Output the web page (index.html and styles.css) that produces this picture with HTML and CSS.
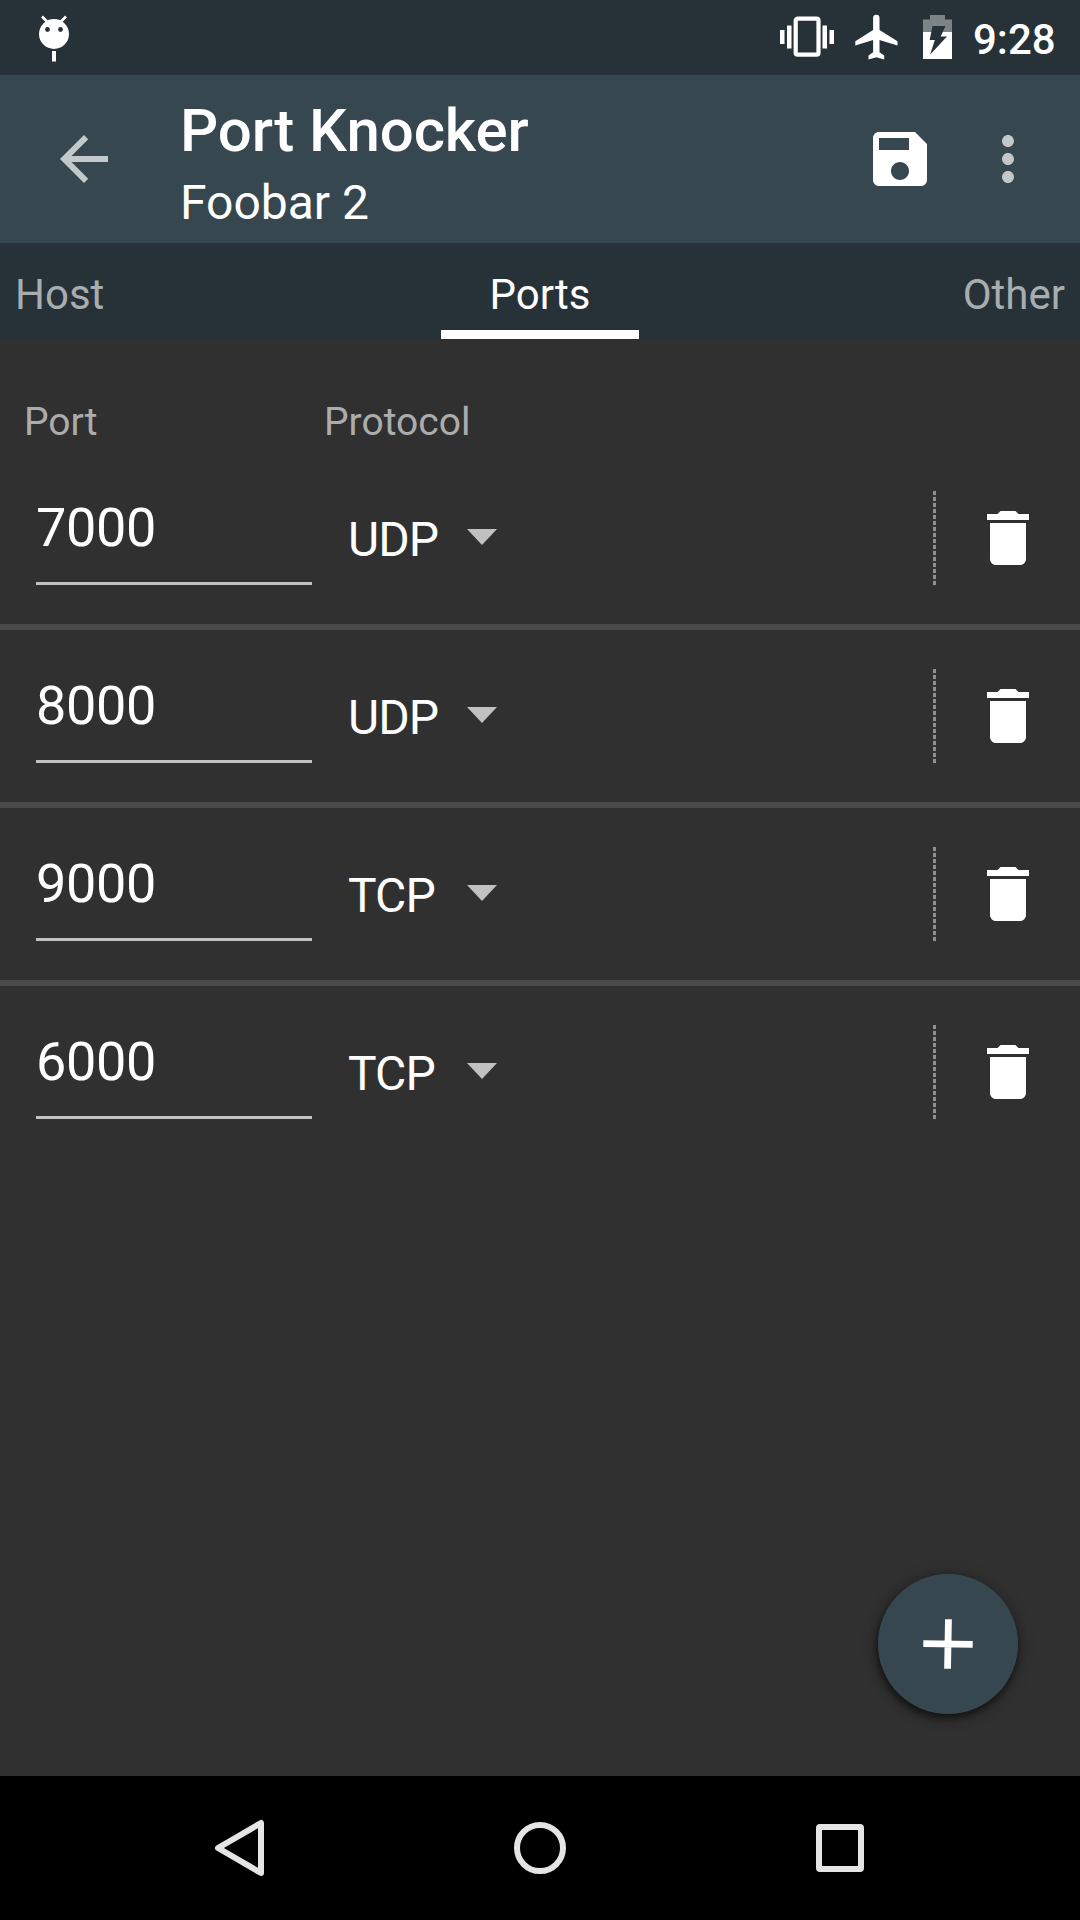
FILE: index.html
```html
<!DOCTYPE html>
<html lang="en">
<head>
<meta charset="utf-8">
<title>Port Knocker</title>
<link rel="stylesheet" href="styles.css">
</head>
<body>
<svg width="0" height="0" class="symbols">
  <symbol id="trash" viewBox="0 0 24 24"><path fill="#fff" d="M6 19c0 1.1.9 2 2 2h8c1.1 0 2-.9 2-2V7H6v12zM19 4h-3.500l-1-1h-5l-1 1H5v2h14V4z"/></symbol>
</svg>
<div class="screen">
  <div class="status">
    <svg class="droid" width="32" height="48" viewBox="0 0 32 48">
      <path d="M4 2.500l5 5M28 2.500l-5 5" stroke="#fff" stroke-width="2.600"/>
      <circle cx="16" cy="20" r="15" fill="#fff"/>
      <circle cx="9.500" cy="15.500" r="2.400" fill="#263238"/><circle cx="22.500" cy="15.500" r="2.400" fill="#263238"/>
      <path d="M14 37h4v10.500h-4z" fill="#fff"/>
    </svg>
    <svg class="vibrate" width="54" height="42" viewBox="0 0 54 42">
      <path fill="#fff" d="M0 14h4.500v14H0zM7 9.500h4.500v23H7zM42.500 9.500H47v23h-4.500zM49.500 14H54v14h-4.500z"/>
      <rect x="15.700" y="2.700" width="22.800" height="36" rx="2" fill="none" stroke="#fff" stroke-width="4.200"/>
    </svg>
    <svg class="plane" width="43" height="46" viewBox="0 0 43 46">
      <path fill="#fff" d="M42.500 31.500v-4.300L24.500 16V4a3.200 3.200 0 0 0-6.400 0v12L.3 27.200v4.300L18.100 26v12.200l-4.600 3.300v4L21.400 43.300l7.800 2.200v-4l-4.700-3.300V26z"/>
    </svg>
    <svg class="battery" width="29" height="44" viewBox="0 0 29 44">
      <path fill="#7d8487" d="M7 0h15v4.500h7V17H0V4.500h7z"/><path fill="#fff" d="M0 17h29v27H0z"/>
      <path fill="#263238" d="M9.500 11h13l-4.800 10.500H24L7.200 39.500l4.600-14.500H6.700z"/>
    </svg>
    <span class="clock">9:28</span>
  </div>
  <header class="appbar">
    <svg class="back" width="72" height="72" viewBox="0 0 24 24"><path fill="#c3c8ca" d="M20 11H7.830l5.590-5.590L12 4l-8 8 8 8 1.410-1.410L7.830 13H20v-2z"/></svg>
    <div class="titles"><h1 class="title">Port Knocker</h1><div class="subtitle">Foobar 2</div></div>
    <svg class="save" width="72" height="72" viewBox="0 0 24 24"><path fill="#fff" d="M17 3H5c-1.110 0-2 .9-2 2v14c0 1.100.89 2 2 2h14c1.100 0 2-.9 2-2V7l-4-4zm-5 16c-1.660 0-3-1.340-3-3s1.340-3 3-3 3 1.340 3 3-1.340 3-3 3zm3-10H5V5h10v4z"/></svg>
    <svg class="more" width="72" height="72" viewBox="0 0 24 24"><path fill="#c3c8ca" d="M12 8c1.100 0 2-.9 2-2s-.9-2-2-2-2 .9-2 2 .9 2 2 2zm0 2c-1.100 0-2 .9-2 2s.9 2 2 2 2-.9 2-2-.9-2-2-2zm0 6c-1.100 0-2 .9-2 2s.9 2 2 2 2-.9 2-2-.9-2-2-2z"/></svg>
  </header>
  <nav class="tabs">
    <span class="tab">Host</span>
    <span class="tab tab-active">Ports</span>
    <span class="tab tab-last">Other</span>
  </nav>
  <main class="content">
    <div class="labels"><span class="label-port">Port</span><span>Protocol</span></div>
    <div class="row">
      <div class="port">7000</div>
      <div class="protocol"><span class="value">UDP</span><i class="caret"></i></div>
      <i class="dots"></i>
      <svg class="trash" width="72" height="72"><use href="#trash"/></svg>
    </div>
    <div class="row">
      <div class="port">8000</div>
      <div class="protocol"><span class="value">UDP</span><i class="caret"></i></div>
      <i class="dots"></i>
      <svg class="trash" width="72" height="72"><use href="#trash"/></svg>
    </div>
    <div class="row">
      <div class="port">9000</div>
      <div class="protocol"><span class="value">TCP</span><i class="caret"></i></div>
      <i class="dots"></i>
      <svg class="trash" width="72" height="72"><use href="#trash"/></svg>
    </div>
    <div class="row">
      <div class="port">6000</div>
      <div class="protocol"><span class="value">TCP</span><i class="caret"></i></div>
      <i class="dots"></i>
      <svg class="trash" width="72" height="72"><use href="#trash"/></svg>
    </div>
    <div class="fab">
      <svg width="72" height="72" viewBox="0 0 72 72"><path transform="rotate(1 36 36)" d="M36 11.300v49.400M11.300 36h49.400" stroke="#fff" stroke-width="6.800"/></svg>
    </div>
  </main>
  <footer class="navbar">
    <svg width="60" height="60" viewBox="0 0 60 60"><path d="M51 5v50L8 30z" fill="none" stroke="#e5e5e5" stroke-width="6" stroke-linejoin="round"/></svg>
    <svg width="60" height="60" viewBox="0 0 60 60"><circle cx="30" cy="30" r="23" fill="none" stroke="#e5e5e5" stroke-width="6"/></svg>
    <svg width="60" height="60" viewBox="0 0 60 60"><rect x="9" y="9" width="42" height="42" rx="1" fill="none" stroke="#e5e5e5" stroke-width="6"/></svg>
  </footer>
</div>
</body>
</html>
```
FILE: styles.css
```css
* { box-sizing: border-box; }
body { margin: 0; background: #303030; font-family: Roboto, sans-serif; color: #fff; }
svg { display: block; flex: none; }
.symbols { display: none; }
.screen { width: 1080px; height: 1920px; display: flex; flex-direction: column; overflow: hidden; }

.status { height: 75px; background: #263238; display: flex; align-items: flex-start; flex: none; }
.droid { margin: 14px auto 0 38px; }
.vibrate { margin: 16px 21px 0 0; }
.plane { margin: 14px 25px 0 0; }
.battery { margin: 15px 21px 0 0; }
.clock { width: 107px; margin-top: 14px; font-size: 42px; line-height: 52px; font-weight: 500; white-space: nowrap; }

.appbar { height: 168px; background: #37474f; display: flex; align-items: flex-start; flex: none; padding-right: 36px; }
.back { margin: 48px 0 0 48px; }
.titles { margin: 21px auto 0 60px; }
.title { margin: 0; font-size: 60px; line-height: 70px; font-weight: 500; letter-spacing: -0.1px; }
.subtitle { font-size: 48px; line-height: 56px; margin-top: 9px; }
.save, .more { margin-top: 48px; }
.save { margin-right: 36px; }

.tabs { height: 96px; background: #263238; display: grid; grid-template-columns: 1fr 198px 1fr; flex: none; font-size: 42px; line-height: 50px; padding: 0 15px; }
.tab { padding-top: 27px; color: #a8adaf; }
.tab-active { color: #fff; text-align: center; border-bottom: 9px solid #fff; }
.tab-last { text-align: right; }

.content { flex: 1; position: relative; padding-top: 58px; }
.labels { display: flex; height: 55px; padding-left: 24px; font-size: 39px; line-height: 50px; color: #acacac; }
.label-port { width: 300px; }
.row { height: 178px; display: flex; align-items: flex-start; padding-left: 36px; border-bottom: 6px solid #4a4a4a; }
.row:nth-of-type(5) { border-bottom: 0; }
.port { width: 276px; height: 96px; margin-top: 37px; border-bottom: 3px solid #c1c1c1; font-size: 54px; line-height: 78px; letter-spacing: -0.35px; }
.protocol { display: flex; align-items: flex-start; margin: 60px auto 0 36px; }
.value { width: 119px; font-size: 48px; line-height: 56px; letter-spacing: -0.9px; }
.caret { width: 30px; height: 16px; margin-top: 17px; background: #c1c1c1; clip-path: polygon(0 0, 100% 0, 50% 100%); }
.dots { width: 3px; height: 95px; margin: 39px 36px 0 0; background: repeating-linear-gradient(#8f8f8f 0 4px, #383838 4px 6px); }
.trash { margin: 50px 36px 0 0; }

.fab { position: absolute; left: 878px; top: 1235px; width: 140px; height: 140px; border-radius: 50%; background: #37474f; display: flex; align-items: center; justify-content: center; box-shadow: -1px 4px 9px rgba(0,0,0,.6), 0 2px 18px rgba(0,0,0,.2); }

.navbar { height: 144px; background: #000; display: flex; justify-content: space-between; align-items: center; padding: 0 210px; flex: none; }
```
